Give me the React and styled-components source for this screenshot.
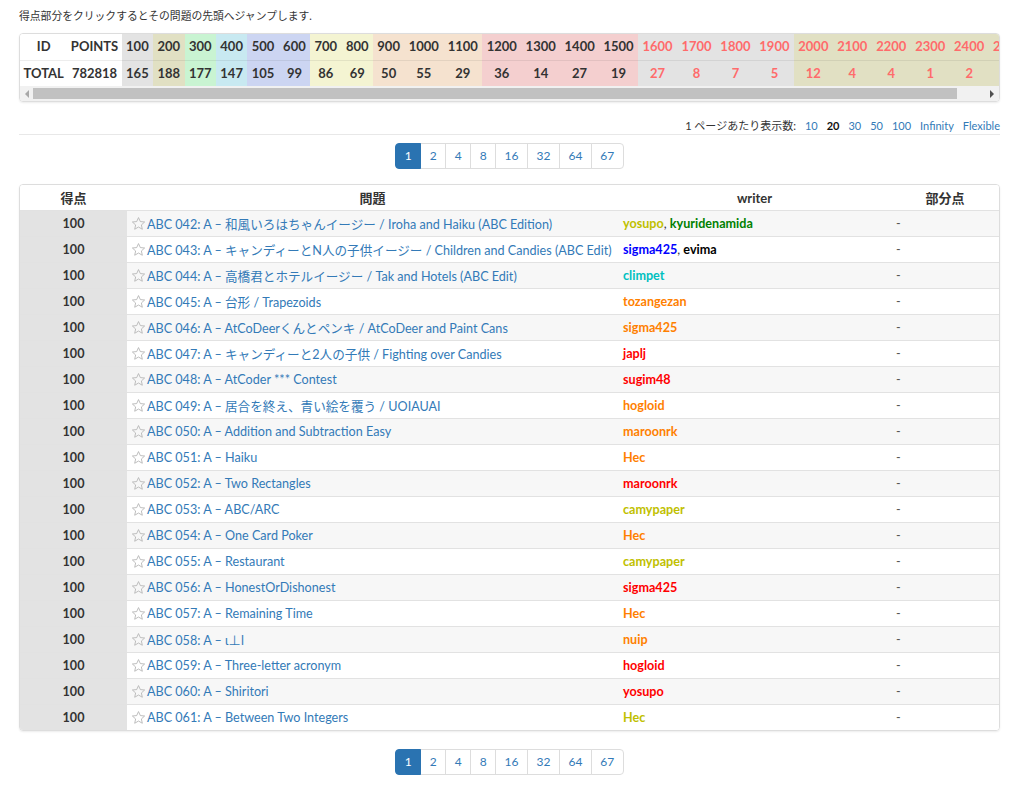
import React from "react";
import styled, { createGlobalStyle } from "styled-components";

const GlobalStyle = createGlobalStyle`
  html, body { margin: 0; padding: 0; background: #fff; }
  body {
    font-family: Lato, "Noto Sans CJK JP", sans-serif;
    color: #333;
    font-size: 13px;
  }
  * { box-sizing: border-box; }
`;

const Page = styled.div`
  padding: 8px 18px 0 19px;
`;

const Note = styled.p`
  margin: 0;
  font-size: 10.8px;
  line-height: 16px;
  color: #333;
`;

const PointsBox = styled.div`
  margin-top: 9px;
  border: 1px solid #ddd;
  border-radius: 4px;
  box-shadow: 0 1px 2px rgba(0, 0, 0, 0.08);
  overflow: hidden;
`;

const PointsClip = styled.div`
  overflow: hidden;
`;

const PointsTable = styled.table`
  border-collapse: collapse;
  white-space: nowrap;
`;

const PCell = styled.td`
  padding: 4px 4.4px;
  height: 26px;
  line-height: 17px;
  font-size: 13px;
  font-weight: 700;
  text-align: center;
  background: ${(p) => p.$bg || "#fff"};
  color: ${(p) => (p.$red ? "#ff6b6b" : "#333")};
  border-bottom: ${(p) => (p.$top ? "1px solid rgba(0,0,0,0.07)" : "none")};
`;

const LabelCell = styled(PCell)`
  padding: 4px 3.5px;
`;

const ScrollBar = styled.div`
  display: flex;
  align-items: center;
  height: 15px;
  background: #f1f1f1;
`;

const ArrowBtn = styled.div`
  flex: none;
  width: ${(p) => p.$w}px;
  height: 15px;
  display: flex;
  align-items: center;
  justify-content: center;
`;

const Triangle = styled.div`
  width: 0;
  height: 0;
  border-top: 4px solid transparent;
  border-bottom: 4px solid transparent;
  ${(p) =>
    p.$dir === "left"
      ? `border-right: 4px solid ${p.$color};`
      : `border-left: 4px solid ${p.$color};`}
`;

const Track = styled.div`
  flex: 1;
  height: 15px;
  display: flex;
  align-items: center;
`;

const Thumb = styled.div`
  height: 11px;
  width: 924px;
  background: #c1c1c1;
`;

const PageSizeRow = styled.div`
  margin-top: 16px;
  display: flex;
  justify-content: flex-end;
  align-items: center;
  gap: 9px;
  font-size: 11px;
  line-height: 16px;
  border-bottom: 1px solid #e8e8e8;
`;

const SizeLabel = styled.span`
  color: #333;
`;

const SizeLink = styled.a`
  color: ${(p) => (p.$active ? "#111" : "#337ab7")};
  font-weight: ${(p) => (p.$active ? 700 : 400)};
  text-decoration: none;
`;

const PagerWrap = styled.div`
  display: flex;
  justify-content: center;
  margin-top: ${(p) => p.$mt}px;
`;

const PageBtn = styled.a`
  display: block;
  height: 26px;
  line-height: 24px;
  padding: 0 8.5px;
  font-size: 12px;
  border: 1px solid ${(p) => (p.$active ? "#2a73b1" : "#ddd")};
  margin-left: -1px;
  background: ${(p) => (p.$active ? "#2a73b1" : "#fff")};
  color: ${(p) => (p.$active ? "#fff" : "#337ab7")};
  text-decoration: none;
  position: relative;
  z-index: ${(p) => (p.$active ? 1 : 0)};
  &:first-child {
    margin-left: 0;
    border-radius: 4px 0 0 4px;
  }
  &:last-child {
    border-radius: 0 4px 4px 0;
  }
`;

const MainTable = styled.table`
  margin-top: 15px;
  width: 981px;
  border-collapse: separate;
  border-spacing: 0;
  table-layout: fixed;
  border: 1px solid #ddd;
  border-radius: 4px;
  box-shadow: 0 1px 2px rgba(0, 0, 0, 0.08);
  overflow: hidden;
`;

const Th = styled.th`
  padding: 0;
  font-size: 13px;
  font-weight: 700;
  color: #333;
  background: #fff;
`;

const Td = styled.td`
  padding: 0;
  border-top: 1px solid #e2e2e2;
  background: ${(p) => (p.$striped ? "#f7f7f7" : "#fff")};
`;

const ScoreTd = styled(Td)`
  background: #e3e3e3;
`;

const Inner = styled.div`
  height: 25px;
  display: flex;
  align-items: center;
  justify-content: ${(p) => (p.$center ? "center" : "flex-start")};
  padding: 0 ${(p) => p.$px ?? 5}px;
  font-size: 12.6px;
  font-weight: ${(p) => (p.$bold ? 700 : 400)};
  white-space: nowrap;
  overflow: hidden;
`;

const HeadInner = styled(Inner)`
  height: 25px;
  font-size: 13px;
  font-weight: 700;
  justify-content: center;
`;

const ProblemLink = styled.a`
  color: #337ab7;
  text-decoration: none;
`;

const StarIcon = styled.svg`
  width: 15px;
  height: 15px;
  flex: none;
  margin-right: 1px;
`;

const Writer = styled.span`
  font-weight: 700;
  color: ${(p) => p.$color};
`;

const Sep = styled.span`
  white-space: pre;
`;

const Dash = styled.span`
  color: #555;
`;

const COLORS = {
  yellow: "#c0c000",
  green: "#008000",
  blue: "#0000ff",
  black: "#000",
  cyan: "#00c0c0",
  orange: "#ff8000",
  red: "#ff0000",
};

const pointCols = [
  [100, 165, "#e3e3e3"],
  [200, 188, "#e1e0c3"],
  [300, 177, "#c9f4d2"],
  [400, 147, "#c8e9f1"],
  [500, 105, "#ccd5f2"],
  [600, 99, "#ccd5f2"],
  [700, 86, "#f4f4d2"],
  [800, 69, "#f4f4d2"],
  [900, 50, "#f5e2cf"],
  [1000, 55, "#f5e2cf"],
  [1100, 29, "#f5e2cf"],
  [1200, 36, "#f4cfcf"],
  [1300, 14, "#f4cfcf"],
  [1400, 27, "#f4cfcf"],
  [1500, 19, "#f4cfcf"],
  [1600, 27, "#e3e3e3", true],
  [1700, 8, "#e3e3e3", true],
  [1800, 7, "#e3e3e3", true],
  [1900, 5, "#e3e3e3", true],
  [2000, 12, "#e1e0c3", true],
  [2100, 4, "#e1e0c3", true],
  [2200, 4, "#e1e0c3", true],
  [2300, 1, "#e1e0c3", true],
  [2400, 2, "#e1e0c3", true],
  [2500, 1, "#e1e0c3", true],
];

const problems = [
  ["042", "和風いろはちゃんイージー / Iroha and Haiku (ABC Edition)", [["yosupo", "yellow"], ["kyuridenamida", "green"]]],
  ["043", "キャンディーとN人の子供イージー / Children and Candies (ABC Edit)", [["sigma425", "blue"], ["evima", "black"]]],
  ["044", "高橋君とホテルイージー / Tak and Hotels (ABC Edit)", [["climpet", "cyan"]]],
  ["045", "台形 / Trapezoids", [["tozangezan", "orange"]]],
  ["046", "AtCoDeerくんとペンキ / AtCoDeer and Paint Cans", [["sigma425", "orange"]]],
  ["047", "キャンディーと2人の子供 / Fighting over Candies", [["japlj", "red"]]],
  ["048", "AtCoder *** Contest", [["sugim48", "red"]]],
  ["049", "居合を終え、青い絵を覆う / UOIAUAI", [["hogloid", "orange"]]],
  ["050", "Addition and Subtraction Easy", [["maroonrk", "orange"]]],
  ["051", "Haiku", [["Hec", "orange"]]],
  ["052", "Two Rectangles", [["maroonrk", "red"]]],
  ["053", "ABC/ARC", [["camypaper", "yellow"]]],
  ["054", "One Card Poker", [["Hec", "orange"]]],
  ["055", "Restaurant", [["camypaper", "yellow"]]],
  ["056", "HonestOrDishonest", [["sigma425", "red"]]],
  ["057", "Remaining Time", [["Hec", "orange"]]],
  ["058", "ι⊥l", [["nuip", "orange"]]],
  ["059", "Three-letter acronym", [["hogloid", "red"]]],
  ["060", "Shiritori", [["yosupo", "red"]]],
  ["061", "Between Two Integers", [["Hec", "yellow"]]],
];

const pages = [1, 2, 4, 8, 16, 32, 64, 67];

function Star() {
  return (
    <StarIcon viewBox="0 0 24 24">
      <polygon
        points="12,2.5 14.9,8.9 21.8,9.6 16.6,14.3 18.1,21.2 12,17.6 5.9,21.2 7.4,14.3 2.2,9.6 9.1,8.9"
        fill="none"
        stroke="#b5b5b5"
        strokeWidth="1.4"
        strokeLinejoin="round"
      />
    </StarIcon>
  );
}

function Pager({ mt }) {
  return (
    <PagerWrap $mt={mt}>
      {pages.map((p) => (
        <PageBtn key={p} href="#" $active={p === 1}>
          {p}
        </PageBtn>
      ))}
    </PagerWrap>
  );
}

export default function App() {
  return (
    <>
      <GlobalStyle />
      <Page>
        <Note>得点部分をクリックするとその問題の先頭へジャンプします.</Note>
        <PointsBox>
          <PointsClip>
            <PointsTable>
              <tbody>
                <tr>
                  <LabelCell $top>ID</LabelCell>
                  <LabelCell $top>POINTS</LabelCell>
                  {pointCols.map(([pt, , bg, red]) => (
                    <PCell key={pt} $top $bg={bg} $red={red}>
                      {pt}
                    </PCell>
                  ))}
                </tr>
                <tr>
                  <LabelCell>TOTAL</LabelCell>
                  <LabelCell>782818</LabelCell>
                  {pointCols.map(([pt, n, bg, red]) => (
                    <PCell key={pt} $bg={bg} $red={red}>
                      {n}
                    </PCell>
                  ))}
                </tr>
              </tbody>
            </PointsTable>
          </PointsClip>
          <ScrollBar>
            <ArrowBtn $w={13}>
              <Triangle $dir="left" $color="#a8a8a8" />
            </ArrowBtn>
            <Track>
              <Thumb />
            </Track>
            <ArrowBtn $w={15}>
              <Triangle $dir="right" $color="#505050" />
            </ArrowBtn>
          </ScrollBar>
        </PointsBox>

        <PageSizeRow>
          <SizeLabel>1 ページあたり表示数:</SizeLabel>
          <SizeLink href="#">10</SizeLink>
          <SizeLink href="#" $active>20</SizeLink>
          <SizeLink href="#">30</SizeLink>
          <SizeLink href="#">50</SizeLink>
          <SizeLink href="#">100</SizeLink>
          <SizeLink href="#">Infinity</SizeLink>
          <SizeLink href="#">Flexible</SizeLink>
        </PageSizeRow>

        <Pager mt={8} />

        <MainTable>
          <colgroup>
            <col style={{ width: "107px" }} />
            <col style={{ width: "491px" }} />
            <col style={{ width: "273px" }} />
            <col style={{ width: "108px" }} />
          </colgroup>
          <thead>
            <tr>
              <Th><HeadInner>得点</HeadInner></Th>
              <Th><HeadInner>問題</HeadInner></Th>
              <Th><HeadInner>writer</HeadInner></Th>
              <Th><HeadInner>部分点</HeadInner></Th>
            </tr>
          </thead>
          <tbody>
            {problems.map(([id, title, writers], i) => (
              <tr key={id}>
                <ScoreTd>
                  <Inner $center $bold>100</Inner>
                </ScoreTd>
                <Td $striped={i % 2 === 0}>
                  <Inner $px={4}>
                    <Star />
                    <ProblemLink href="#">{`ABC ${id}: A – ${title}`}</ProblemLink>
                  </Inner>
                </Td>
                <Td $striped={i % 2 === 0}>
                  <Inner>
                    {writers.map(([name, c], j) => (
                      <React.Fragment key={name}>
                        {j > 0 && <Sep>, </Sep>}
                        <Writer $color={COLORS[c]}>{name}</Writer>
                      </React.Fragment>
                    ))}
                  </Inner>
                </Td>
                <Td $striped={i % 2 === 0}>
                  <Inner>
                    <Dash>-</Dash>
                  </Inner>
                </Td>
              </tr>
            ))}
          </tbody>
        </MainTable>

        <Pager mt={18} />
      </Page>
    </>
  );
}
